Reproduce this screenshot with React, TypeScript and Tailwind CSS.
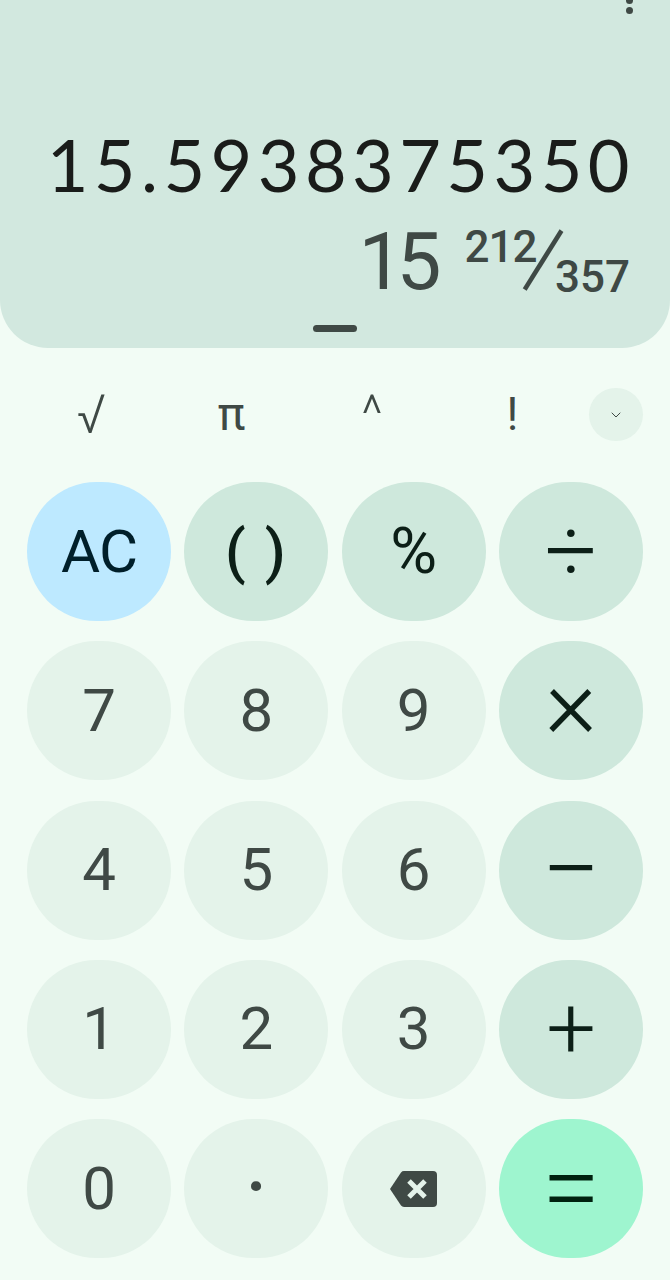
import { ChevronDown } from 'lucide-react';

const sans = 'font-["Roboto",sans-serif]';

const keys = [
  { label: 'AC', kind: 'clear', size: 'text-[60px] tracking-[-1px]' },
  { label: '( )', kind: 'op', size: 'text-[60px] font-medium tracking-[2px]' },
  { label: '%', kind: 'op', size: 'text-[64px]' },
  { label: '÷', kind: 'op', size: 'text-[92px] font-light pb-[2px]' },
  { label: '7', kind: 'num', size: 'text-[60px]' },
  { label: '8', kind: 'num', size: 'text-[60px]' },
  { label: '9', kind: 'num', size: 'text-[60px]' },
  { label: '×', kind: 'op', size: 'text-[100px] font-light pb-[16px]' },
  { label: '4', kind: 'num', size: 'text-[60px]' },
  { label: '5', kind: 'num', size: 'text-[60px]' },
  { label: '6', kind: 'num', size: 'text-[60px]' },
  { label: '−', kind: 'op', size: 'text-[104px] font-light' },
  { label: '1', kind: 'num', size: 'text-[60px]' },
  { label: '2', kind: 'num', size: 'text-[60px]' },
  { label: '3', kind: 'num', size: 'text-[60px]' },
  { label: '+', kind: 'op', size: 'text-[88px] font-light pb-[2px]' },
  { label: '0', kind: 'num', size: 'text-[60px]' },
  { label: '·', kind: 'num', size: 'text-[90px]' },
  { label: 'back', kind: 'num', size: '' },
  { label: '=', kind: 'equals', size: 'text-[106px] font-light pb-[2px]' },
];

const kindClass: Record<string, string> = {
  num: 'bg-[#e4f3ea] text-[#3f4945]',
  op: 'bg-[#cee8dc] text-[#0c1f17]',
  clear: 'bg-[#bde9ff] text-[#001f2a]',
  equals: 'bg-[#9ef5cf] text-[#00210f]',
};

function BackspaceIcon() {
  return (
    <svg width="50" height="38" viewBox="0 0 50 38">
      <path
        d="M15 1h29a4 4 0 0 1 4 4v28a4 4 0 0 1-4 4H15a4 4 0 0 1-3-1.4L1 19 12 2.4A4 4 0 0 1 15 1z"
        fill="#3f4945"
      />
      <path d="M20 11l16 16M36 11L20 27" stroke="#e4f3ea" strokeWidth="5" fill="none" />
    </svg>
  );
}

export default function App() {
  return (
    <div className={`w-[670px] h-[1280px] overflow-hidden bg-[#f2fcf5] ${sans}`}>
      <section className="h-[348px] bg-[#d2e8df] rounded-b-[48px] flex flex-col items-end pr-[40px] overflow-hidden">
        <div className="flex flex-col items-center gap-[3px] -mt-[3px] mr-[-3px] h-[125px]">
          <span className="w-[7px] h-[7px] rounded-full bg-[#3f4945]" />
          <span className="w-[7px] h-[7px] rounded-full bg-[#3f4945]" />
        </div>
        <div className='font-["Lato",sans-serif] text-[72px] leading-[84px] tracking-[5.4px] mr-[-5px] text-[#1a1c1a] whitespace-nowrap'>
          15.5938375350
        </div>
        <div className="flex items-start h-[78px] mt-[7px] text-[#3f4945]">
          <span className="text-[80px] leading-[78px] tracking-[-7px] mt-[10px]">15</span>
          <span className="text-[44px] leading-[50px] ml-[30px] mt-[9px] font-medium tracking-[-1px]">212</span>
          <span className="text-[106px] leading-[78px] font-light ml-[-17px] mt-[9px]">⁄</span>
          <span className="text-[44px] leading-[50px] mt-[39px] ml-[-12px] font-medium">357</span>
        </div>
      </section>
      <div className="flex justify-center h-0">
        <span className="w-[44px] h-[7px] rounded-full bg-[#3f4945] -translate-y-[23px]" />
      </div>

      <div className="flex items-center pl-[21px] pr-[27px] mt-[40px] h-[53px] text-[#3f4945]">
        <span className="w-[140.4px] text-center text-[54px] leading-[53px] font-light">√</span>
        <span className="w-[140.4px] text-center text-[46px] leading-[53px]">π</span>
        <span className="w-[140.4px] text-center text-[52px] leading-[53px] font-light">^</span>
        <span className="w-[140.4px] text-center text-[46px] leading-[53px]">!</span>
        <span className="ml-auto w-[54px] h-[53px] rounded-full bg-[#e4f3ea] flex items-center justify-center">
          <ChevronDown size={16} strokeWidth={1.5} />
        </span>
      </div>

      <div className="grid grid-cols-4 gap-x-[13.33px] gap-y-[20.25px] px-[27px] mt-[41px]">
        {keys.map((k) => (
          <div
            key={k.label}
            className={`h-[139px] rounded-full flex items-center justify-center leading-none ${k.size} ${kindClass[k.kind]}`}
          >
            {k.label === 'back' ? <BackspaceIcon /> : k.label}
          </div>
        ))}
      </div>
    </div>
  );
}
